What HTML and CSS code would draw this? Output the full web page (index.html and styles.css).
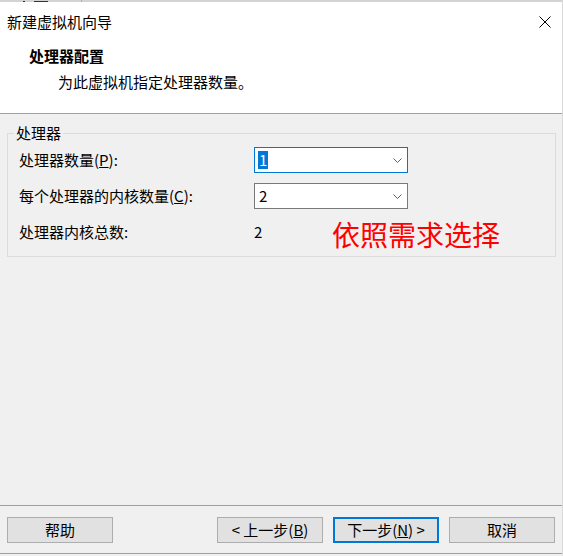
FILE: index.html
```html
<!DOCTYPE html>
<html lang="zh-CN">
<head>
<meta charset="utf-8">
<title>新建虚拟机向导</title>
<link rel="stylesheet" href="styles.css">
</head>
<body>
<div class="window">
  <div class="topstrip"><span class="frag frag-a"></span><span class="frag frag-b"></span><span class="frag-div"></span></div>
  <header class="header">
    <div class="titlebar">
      <span class="title">新建虚拟机向导</span>
      <svg class="close" width="12" height="12" viewBox="0 0 12 12"><path d="M0.5 0.5 L11.5 11.5 M11.5 0.5 L0.5 11.5" stroke="#000" stroke-width="1" fill="none"/></svg>
    </div>
    <div class="heading">处理器配置</div>
    <div class="subtitle">为此虚拟机指定处理器数量。</div>
  </header>
  <main class="content">
    <fieldset class="group">
      <legend class="legend">处理器</legend>
      <div class="rows">
        <div class="row">
          <span class="label">处理器数量(<u>P</u>):</span>
          <div class="combo focus">
            <span class="sel">1</span>
            <svg class="chev" width="9" height="5" viewBox="0 0 9 5"><polyline points="0.5,0.5 4.5,4.5 8.5,0.5" stroke="#606060" stroke-width="1" fill="none"/></svg>
          </div>
        </div>
        <div class="row">
          <span class="label">每个处理器的内核数量(<u>C</u>):</span>
          <div class="combo">
            <span class="val">2</span>
            <svg class="chev" width="9" height="5" viewBox="0 0 9 5"><polyline points="0.5,0.5 4.5,4.5 8.5,0.5" stroke="#606060" stroke-width="1" fill="none"/></svg>
          </div>
        </div>
        <div class="row">
          <span class="label">处理器内核总数:</span>
          <span class="total">2</span>
          <span class="note">依照需求选择</span>
        </div>
      </div>
    </fieldset>
  </main>
  <footer class="footer">
    <button class="btn">帮助</button>
    <button class="btn btn-back">&lt; 上一步(<u>B</u>)</button>
    <button class="btn btn-default">下一步(<u>N</u>) &gt;</button>
    <button class="btn">取消</button>
  </footer>
</div>
</body>
</html>
```

FILE: styles.css
```css
html, body {
  margin: 0;
  padding: 0;
}
body {
  background: #f0f0f0;
  font-family: "Noto Sans CJK SC", "Microsoft YaHei", sans-serif;
  font-size: 15px;
  color: #000;
}
.window {
  width: 563px;
  height: 556px;
  display: flex;
  flex-direction: column;
  box-sizing: border-box;
  border-right: 1px solid #d9d9d9;
  border-bottom: 2px solid #f0f0f0;
}
.topstrip {
  height: 2px;
  background: #d3d3d3;
  display: flex;
  align-items: flex-end;
}
.frag {
  height: 1px;
  background: #333;
}
.frag-a { width: 2px; margin-left: 23px; }
.frag-b { width: 14px; margin-left: 9px; }
.frag-div {
  width: 1px;
  height: 2px;
  background: #b0b0b0;
  margin-left: 33px;
}
.header {
  background: #fff;
  height: 111px;
  border-bottom: 1px solid #a0a0a0;
}
.titlebar {
  display: flex;
  justify-content: space-between;
  align-items: center;
  height: 20px;
  margin-top: 10px;
  padding: 0 11px 0 7px;
  line-height: 20px;
}
.close { display: block; }
.heading {
  margin-top: 14px;
  padding-left: 29px;
  font-weight: bold;
  line-height: 20px;
}
.subtitle {
  margin-top: 6px;
  padding-left: 58px;
  line-height: 20px;
}
.content {
  flex: 1;
  padding: 9px 6px 0 7px;
}
.group {
  margin: 0;
  padding: 4px 11px 11px 11px;
  border: 1px solid #dcdcdc;
}
.legend {
  padding: 0 2px;
  margin-left: -5px;
  line-height: 20px;
}
.rows {
  display: flex;
  flex-direction: column;
  gap: 10px;
}
.row {
  position: relative;
  display: grid;
  grid-template-columns: 235px 154px;
  align-items: center;
  height: 26px;
  line-height: 20px;
}
.combo {
  height: 26px;
  box-sizing: border-box;
  border: 1px solid #7a7a7a;
  background: #fff;
  display: flex;
  align-items: center;
  justify-content: space-between;
  padding: 0 5px 0 4px;
}
.combo.focus {
  border-color: #0078d7;
  padding-left: 3px;
}
.sel {
  background: #0078d7;
  color: #fff;
  padding: 0 1px;
  line-height: 18px;
}
.chev { display: block; }
.note {
  position: absolute;
  left: 313px;
  top: 1px;
  font-size: 28px;
  line-height: 28px;
  color: #ff0000;
  white-space: nowrap;
}
.footer {
  display: flex;
  gap: 10px;
  border-top: 1px solid #a0a0a0;
  border-bottom: 1px solid #a0a0a0;
  padding: 11px 7px 10px 7px;
}
.btn {
  width: 106px;
  height: 26px;
  box-sizing: border-box;
  border: 1px solid #adadad;
  background: #e1e1e1;
  font-family: inherit;
  font-size: 15px;
  line-height: 22px;
  color: #000;
  padding: 0;
  border-radius: 0;
}
.btn-back {
  margin-left: auto;
}
.btn-default {
  border: 2px solid #0078d7;
}
```
